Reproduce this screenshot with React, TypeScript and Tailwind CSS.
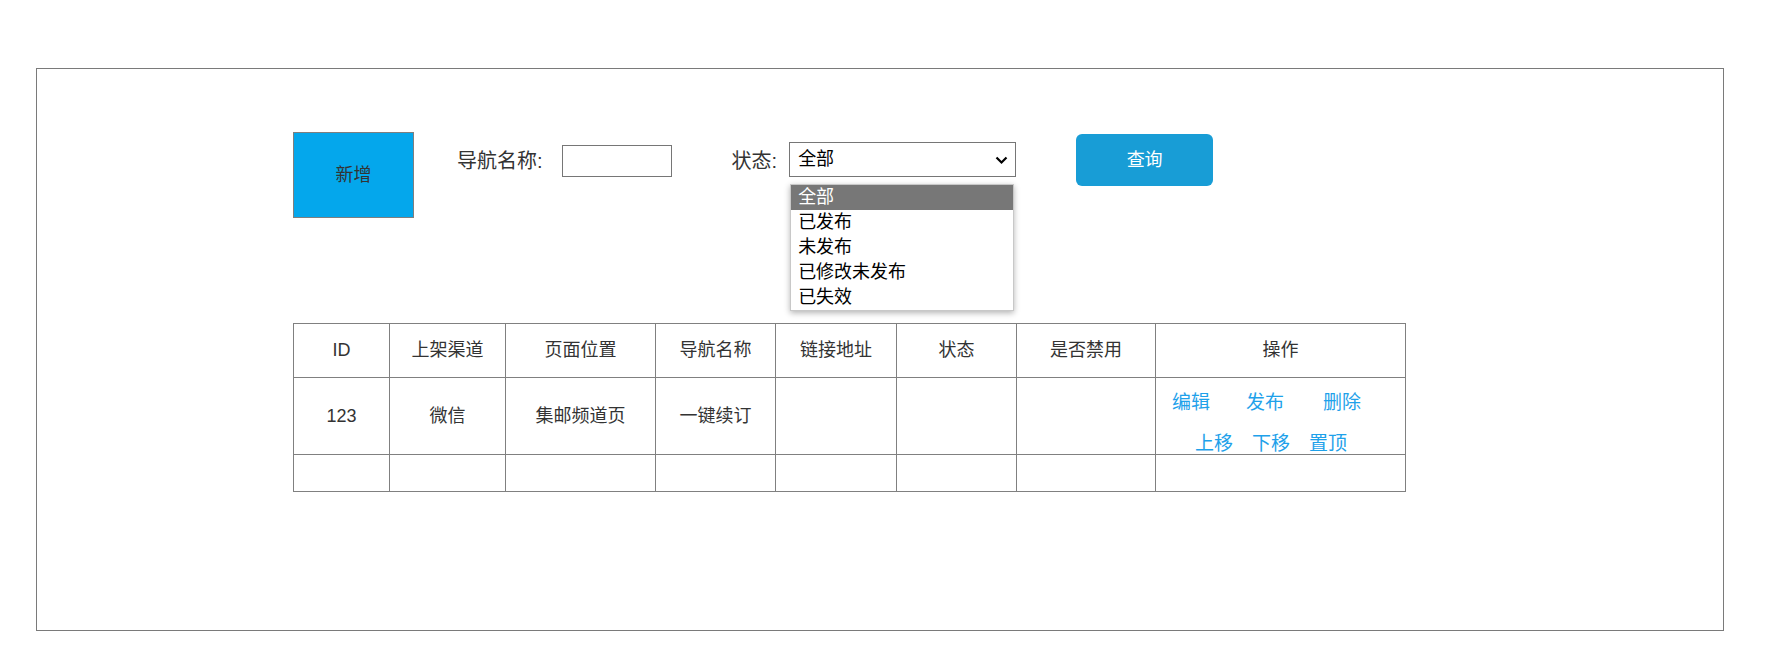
import { useState } from 'react';

const font = { fontFamily: '"Liberation Sans", "Noto Sans CJK SC", sans-serif' };

const columns = [
  { title: 'ID', width: 96 },
  { title: '上架渠道', width: 116 },
  { title: '页面位置', width: 150 },
  { title: '导航名称', width: 120 },
  { title: '链接地址', width: 121 },
  { title: '状态', width: 120 },
  { title: '是否禁用', width: 139 },
  { title: '操作', width: 250 },
];

const statusOptions = ['全部', '已发布', '未发布', '已修改未发布', '已失效'];

function StatusSelect() {
  const [value] = useState('全部');

  return (
    <div className="relative mt-[10px]">
      <div className="flex h-[35px] w-[227px] items-center justify-between border border-[#767676] bg-white pl-[8px] pr-[7px] text-[18px] text-black">
        <span>{value}</span>
        <svg width="13" height="9" viewBox="0 0 13 9" className="mt-[1px]">
          <path d="M1.5 1.5 L6.5 6.5 L11.5 1.5" fill="none" stroke="#000" strokeWidth="2.2" />
        </svg>
      </div>

      {/* opened option list */}
      <div className="absolute left-[1px] top-[42px] z-10 w-[224px] border border-[#c8c8c8] bg-white shadow-[0_2px_6px_rgba(0,0,0,0.3)]">
        {statusOptions.map((opt) => (
          <div
            key={opt}
            className={
              opt === value
                ? 'h-[25px] bg-[#777777] pl-[7px] text-[18px] leading-[25px] text-white'
                : 'h-[25px] pl-[7px] text-[18px] leading-[25px] text-black'
            }
          >
            {opt}
          </div>
        ))}
      </div>
    </div>
  );
}

function ActionLinks() {
  return (
    <div className="flex h-[61px] flex-col text-[19px] leading-[20px] text-[#1ea1ea]">
      <div className="flex pl-[16px]">
        <a className="cursor-pointer">编辑</a>
        <a className="ml-[36px] cursor-pointer">发布</a>
        <a className="ml-[39px] cursor-pointer">删除</a>
      </div>
      <div className="mt-[21px] flex pl-[39px]">
        <a className="cursor-pointer">上移</a>
        <a className="ml-[19px] cursor-pointer">下移</a>
        <a className="ml-[19px] cursor-pointer">置顶</a>
      </div>
    </div>
  );
}

export default function App() {
  return (
    <div className="h-[649px] w-full bg-white pl-[36px] pt-[68px]" style={font}>
      <div className="h-[563px] w-[1688px] border border-[#7a7a7a] pl-[256px] pt-[63px]">
        {/* toolbar */}
        <div className="flex items-start">
          <button className="flex h-[86px] w-[121px] items-center justify-center border border-[#7f7f7f] bg-[#04a7ec] text-[18px] text-[#333]">
            新增
          </button>

          <div className="ml-[43px] mt-[13px] flex h-[32px] items-center">
            <span className="text-[20px] text-[#333]">导航名称:</span>
            <input
              type="text"
              className="ml-[19px] h-[32px] w-[110px] border border-[#767676] bg-white outline-none"
            />
          </div>

          <span className="ml-[60px] mt-[13px] text-[20px] leading-[32px] text-[#333]">状态:</span>
          <div className="ml-[12px]">
            <StatusSelect />
          </div>

          <button className="ml-[60px] mt-[2px] h-[52px] w-[137px] rounded-[6px] bg-[#189dd6] text-[18px] text-white">
            查询
          </button>
        </div>

        {/* list */}
        <table className="mt-[105px] w-[1112px] table-fixed border-collapse text-[18px] text-[#333]">
          <colgroup>
            {columns.map((c) => (
              <col key={c.title} style={{ width: c.width }} />
            ))}
          </colgroup>
          <thead>
            <tr className="h-[54px]">
              {columns.map((c) => (
                <th key={c.title} className="border border-[#808080] text-center font-normal">
                  {c.title}
                </th>
              ))}
            </tr>
          </thead>
          <tbody>
            <tr className="h-[77px]">
              <td className="border border-[#808080] text-center">123</td>
              <td className="border border-[#808080] text-center">微信</td>
              <td className="border border-[#808080] text-center">集邮频道页</td>
              <td className="border border-[#808080] text-center">一键续订</td>
              <td className="border border-[#808080]"></td>
              <td className="border border-[#808080]"></td>
              <td className="border border-[#808080]"></td>
              <td className="border border-[#808080] p-0 pt-[15px] align-top">
                <ActionLinks />
              </td>
            </tr>
            <tr className="h-[37px]">
              {columns.map((c) => (
                <td key={c.title} className="border border-[#808080]"></td>
              ))}
            </tr>
          </tbody>
        </table>
      </div>
    </div>
  );
}
